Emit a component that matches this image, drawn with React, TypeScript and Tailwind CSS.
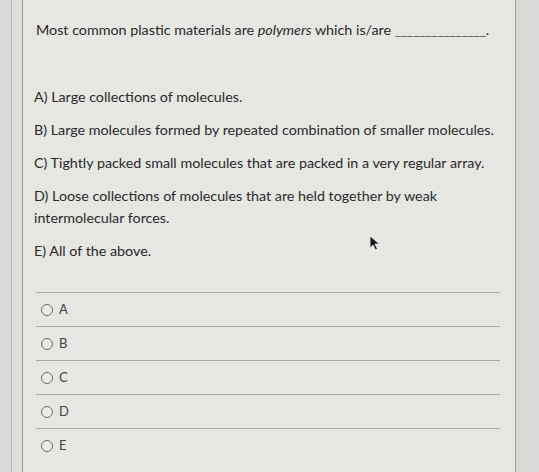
import React from "react";

const options = [
  "A) Large collections of molecules.",
  "B) Large molecules formed by repeated combination of smaller molecules.",
  "C) Tightly packed small molecules that are packed in a very regular array.",
];

export default function App() {
  return (
    <div className="w-[539px] h-[472px] overflow-hidden bg-[#d9dad7] flex text-[#2a2a2a]" style={{ fontFamily: "Lato, 'Open Sans', sans-serif" }}>
      <div className="w-[12px] border-r border-[#b8b8b6]" />
      <div className="w-[10px] bg-[#dfe0dd]" />
      <div className="relative w-[494px] h-full border-l border-r border-[#9c9c9a] bg-[#e6e6e3] pl-[11px] pr-[14px]">
        <p className="pt-[19px] text-[14.3px] leading-[22px] pl-[2px] whitespace-nowrap">
          Most common plastic materials are <i>polymers</i> which is/are <span className="tracking-[-0.5px] text-[#555]">_______________</span>.
        </p>
        <div className="mt-[45px] flex flex-col text-[14.3px] leading-[22px] whitespace-nowrap">
          {options.map((o) => (
            <p key={o} className="mb-[11px]">{o}</p>
          ))}
          <p className="mb-[11px]">D) Loose collections of molecules that are held together by weak<br />intermolecular forces.</p>
          <p>E) All of the above.</p>
        </div>
        <div className="mt-[30px] mr-[1px] ml-[2px] flex flex-col">
          {["A", "B", "C", "D", "E"].map((l) => (
            <div key={l} className="h-[34px] border-t border-[#a9aaa8] flex items-center gap-[6px] pl-[5px] text-[13px] text-[#444]">
              <span className="w-[12px] h-[12px] rounded-full border border-[#6d6d6d] bg-[#ececea]" />
              <span>{l}</span>
            </div>
          ))}
        </div>
        <svg className="absolute left-[346px] top-[235px]" width="12" height="16" viewBox="0 0 12 16">
          <path d="M1 1 L1 13 L4 10 L6.5 15 L8.5 14 L6 9 L10.5 9 Z" fill="#1a1a1a" stroke="#f0f0f0" strokeWidth="0.8" />
        </svg>
      </div>
    </div>
  );
}
